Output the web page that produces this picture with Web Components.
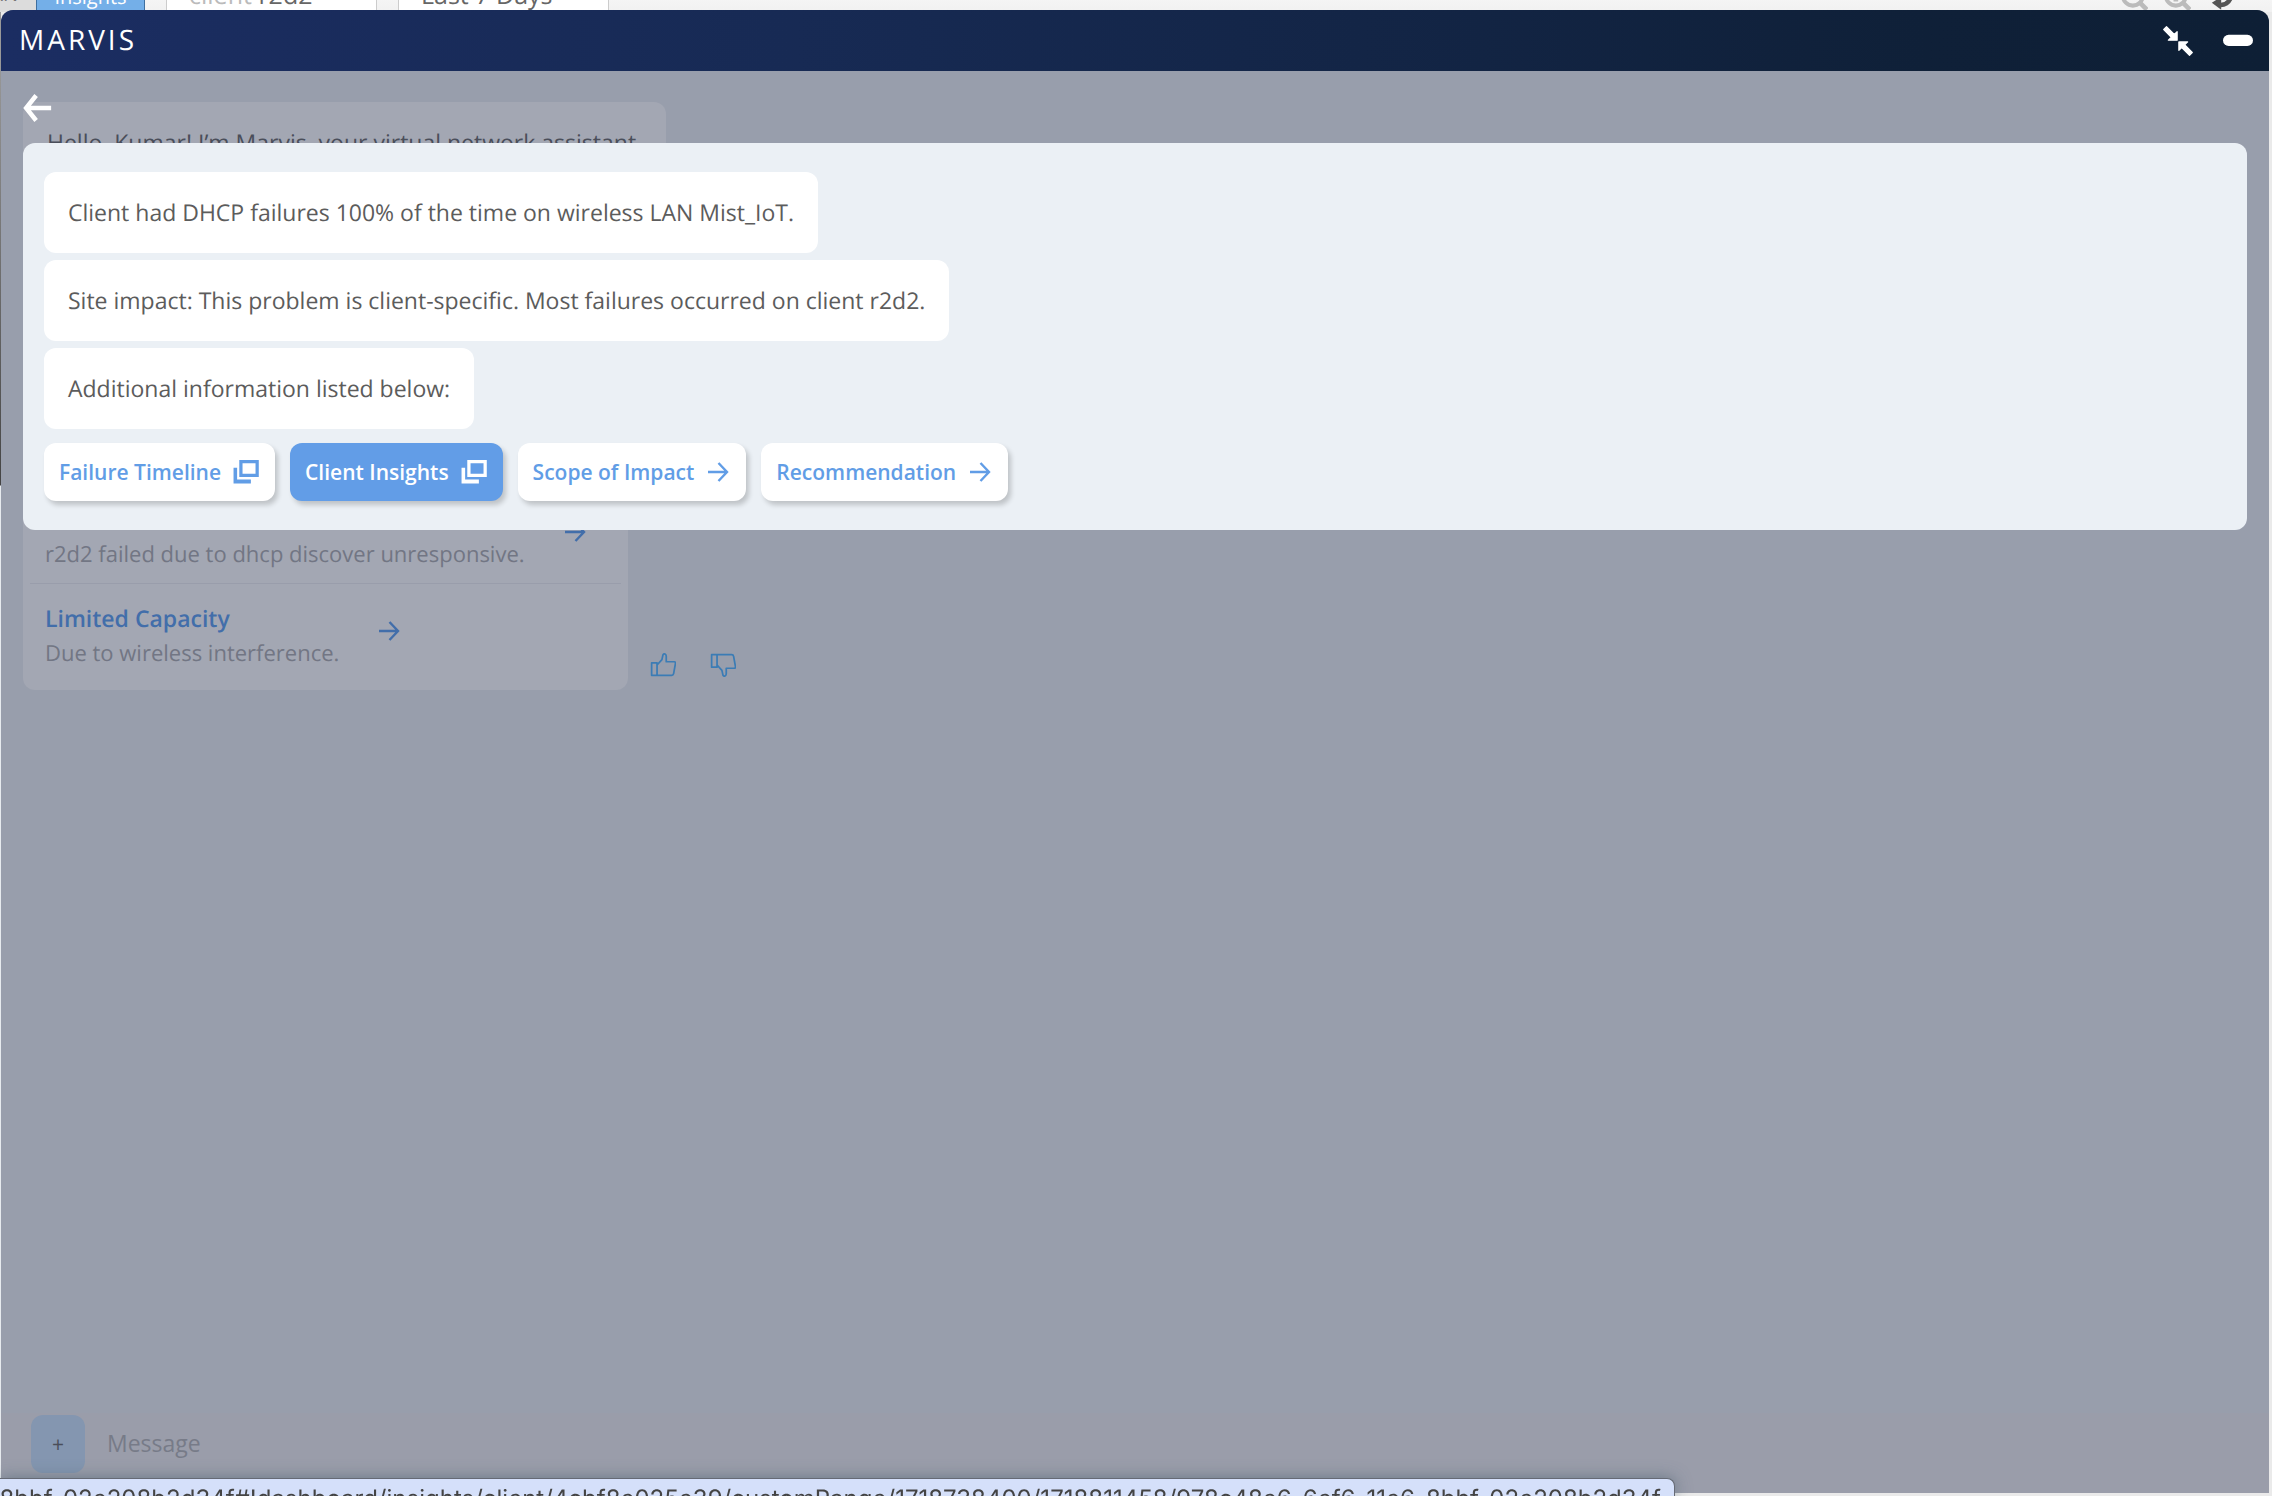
<!DOCTYPE html>
<html lang="en">
<head>
<meta charset="utf-8">
<title>Marvis</title>
<style>
html,body{margin:0;height:100%;overflow:hidden}
body{font-family:"Open Sans","Noto Sans",sans-serif;font-size:23px;line-height:33px;color:#5c5c5c;background:#e9e9e9;text-rendering:geometricPrecision}
</style>
</head>
<body>
<marvis-app></marvis-app>
<script>
const define=(name,css,html)=>customElements.define(name,class extends HTMLElement{
  constructor(){
    super();
    this.attachShadow({mode:'open'}).innerHTML='<style>*{box-sizing:border-box}button,input,select{font:inherit;color:inherit;margin:0;border:0;padding:0;background:none}svg{display:block;flex:none}'+css+'</style>'+(typeof html==='function'?html(this):html);
  }
});

const glyphs={
  arrow:'<path d="M2 12h18M12.500 3l8.500 9-8.500 9" fill="none" stroke="currentColor" stroke-width="2.400"/>',
  windows:'<path d="M7.300 2.500h15v12.500h-15z" fill="none" stroke="currentColor" stroke-width="3"/><path d="M0.500 8v14.500h16v-3.500H3.800V8z" fill="currentColor"/>',
  back:'<path d="M22.500 12H3M10.500 2L2.500 12l8 10" fill="none" stroke="currentColor" stroke-width="3.600"/>',
  compress:'<g fill="currentColor"><path d="M0.600 2.800L2.800.600 9 6.800 11.300 4.600V11.300H4.300L6.700 9z" stroke="currentColor" stroke-linejoin="round"/><path d="M23.400 21.200L21.200 23.400 15 17.200 12.700 19.400V12.700H19.700L17.300 15z" stroke="currentColor" stroke-linejoin="round"/></g>',
  minus:'<rect y="7" width="24" height="9" rx="4.500" fill="currentColor"/>',
  up:'<path d="M1.500 10h5v11.500h-5zM6.500 12l4.500-5 1-4.500c1-1.500 3-.500 3 1.500v5h7.500c.700 0 1 .800 1 1.500l-1.700 9.500c-.200 1-.800 1.500-1.800 1.500H6.500" fill="none" stroke="currentColor" stroke-width="1.600" stroke-linejoin="round"/>',
  zoom:'<circle cx="11" cy="10" r="8.500" fill="none" stroke="currentColor" stroke-width="3.500"/><path d="M17 16l6 6" stroke="currentColor" stroke-width="4"/>',
  zoomin:'<circle cx="11" cy="10" r="8.500" fill="none" stroke="currentColor" stroke-width="3.500"/><path d="M17 16l6 6M11 6v9" stroke="currentColor" stroke-width="4"/>',
  refresh:'<path d="M3 8a9 9 0 0 1 17 0M21 12a9 9 0 0 1-9 6" fill="none" stroke="currentColor" stroke-width="4"/><path d="M13 11v11l-8-6z" fill="currentColor"/>'
};
define('ui-icon',':host{display:block;flex:none;width:24px;height:24px}:host([medium]){width:26px;height:26px}:host([large]){width:30px;height:30px}:host([flip]){transform:scaleY(-1)}svg{width:100%;height:100%}',
  el=>'<svg viewBox="0 0 24 24" aria-hidden="true">'+glyphs[el.getAttribute('name')]+'</svg>');

define('chat-bubble',`:host{display:block;width:fit-content;padding:24px;border-radius:12px;background:#fff;color:#5c5c5c}
:host([dim]){background:#a3a7b3;color:#4a4e5a}`,'<slot></slot>');

define('action-button',`:host{display:block}
button{display:flex;align-items:center;gap:12px;height:58px;padding:0 16px 1px 15px;border-radius:12px;background:#fff;color:#619de6;font-size:21px;line-height:30px;font-weight:600;box-shadow:3px 4px 5px #00000030;white-space:nowrap}
:host([active]) button{background:#629de7;color:#fff}`,
  '<button type="button"><slot></slot><slot name="icon"></slot></button>');

define('result-row',`:host{display:flex;align-items:center;padding:18px 15px 14px;margin:0 7px;border-bottom:1px solid transparent}
:host([divided]){border-color:#999dab}
.copy{display:flex;flex-direction:column;gap:3px}
.title{min-height:33px;font-weight:600;color:#426eaa}
.desc{font-size:22px;line-height:30px;color:#727684}
ui-icon{color:#426eaa;margin:0 0 8px 38px}`,
  '<div class="copy"><div class="title"><slot name="title"></slot></div><div class="desc"><slot></slot></div></div><ui-icon name="arrow"></ui-icon>');

define('page-toolbar',`:host{display:flex;align-items:flex-end;height:48px;margin-top:-36px;background:linear-gradient(#fff,#f1f1f1);color:#666;font-size:25px}
a,.box,.tab{height:48px;line-height:33px;padding-top:15px}
.tab{width:36px;background:#dcdcdc;color:#777;font-size:20px;line-height:30px;overflow:hidden;display:flex;justify-content:flex-end;padding-right:18px}
a{width:109px;padding-top:18px;text-align:center;text-decoration:none;color:#fff;background:#74afe8;border:1px solid #3f6f9f;font-size:20px;line-height:27px}
.box{width:211px;padding-left:22px;background:#fff;border:solid #ccc;border-width:0 1px;margin-left:21px}
.box b{font-weight:400;color:#bbb}
.tools{display:flex;gap:15px;margin-left:auto;padding-right:38px;color:#bbb}
.tools ui-icon{width:28px;height:28px}
.tools .dark{color:#555}`,
  `<span class="tab">WLAN</span><a href="#insights">Insights</a><div class="box"><b>client</b> r2d2</div><div class="box">Last 7 Days</div>
<div class="tools"><ui-icon name="zoom"></ui-icon><ui-icon name="zoomin"></ui-icon><ui-icon class="dark" name="refresh"></ui-icon></div>`);

define('dialog-header',`:host{display:flex;align-items:center;justify-content:space-between;height:61px;padding:0 16px;background:linear-gradient(90deg,#1b2d62,#172a54 35%,#0f2038 85%,#0e1f35);color:#fff}
h1{margin:0;padding:0 2px 2px;font-size:28px;line-height:38px;font-weight:400;letter-spacing:3px}
div{display:flex;gap:30px}button{display:block}`,
  `<h1>MARVIS</h1><div><button aria-label="Shrink"><ui-icon large name="compress"></ui-icon></button><button aria-label="Minimize"><ui-icon large name="minus"></ui-icon></button></div>`);

define('chat-history',`:host{display:flex;flex-direction:column;gap:10px;padding:31px 22px}
.row{display:flex;align-items:flex-end;gap:22px}
.card{display:flex;flex-direction:column;justify-content:flex-end;min-height:497px;padding-bottom:7px;border-radius:12px;background:#a3a7b3}
.vote{display:flex;gap:34px;color:#3b7cb5;padding-bottom:12px}
.card result-row:first-child{padding-right:34px}`,
  `<chat-bubble dim>Hello, Kumar! I’m Marvis, your virtual network assistant.</chat-bubble>
<div class="row"><div class="card"><result-row divided>r2d2 failed due to dhcp discover unresponsive.</result-row>
<result-row><span slot="title">Limited Capacity</span>Due to wireless interference.</result-row></div>
<div class="vote"><button aria-label="Helpful"><ui-icon medium name="up"></ui-icon></button><button aria-label="Not helpful"><ui-icon medium flip name="up"></ui-icon></button></div></div>`);

define('detail-panel',`:host{display:flex;flex-direction:column;gap:7px;padding:29px 21px;border-radius:12px;background:#ebf0f5}
nav{display:flex;gap:15px;margin-top:7px}`,
  `<chat-bubble>Client had DHCP failures 100% of the time on wireless LAN Mist_IoT.</chat-bubble>
<chat-bubble>Site impact: This problem is client-specific. Most failures occurred on client r2d2.</chat-bubble>
<chat-bubble>Additional information listed below:</chat-bubble>
<nav><action-button>Failure Timeline<ui-icon medium slot="icon" name="windows"></ui-icon></action-button>
<action-button active>Client Insights<ui-icon medium slot="icon" name="windows"></ui-icon></action-button>
<action-button>Scope of Impact<ui-icon slot="icon" name="arrow"></ui-icon></action-button>
<action-button>Recommendation<ui-icon slot="icon" name="arrow"></ui-icon></action-button></nav>`);

define('message-bar',`:host{display:flex;align-items:center;gap:22px;padding:2px 30px 20px;background:#9a9daa}
button{width:54px;height:58px;border-radius:12px;background:#8496b0;color:#4a4e5a;font-size:21px}
input{flex:1;min-width:0;height:58px;padding-bottom:2px;outline:0}
input::placeholder{color:#777b88;opacity:1}`,
  '<button aria-label="Add">+</button><input type="text" aria-label="Message" placeholder="Message">');

define('marvis-dialog',`:host{position:fixed;inset:10px 3px 3px 1px;display:flex;flex-direction:column;border-radius:12px 12px 0 0;overflow:hidden;background:#989eac}
main{position:relative;flex:1}
.overlay{position:absolute;inset:0;padding:22px;display:flex;flex-direction:column;gap:20px}
.overlay button{width:30px;height:30px;color:#fff}`,
  `<dialog-header></dialog-header><main><chat-history></chat-history>
<div class="overlay"><button aria-label="Back"><ui-icon large name="back"></ui-icon></button><detail-panel></detail-panel></div></main><message-bar></message-bar>`);

define('link-status',`:host{position:fixed;left:0;bottom:0;display:flex;justify-content:flex-end;width:1675px;max-width:100%;height:18px;padding:5px 13px 0 0;overflow:hidden;box-sizing:border-box;border-top:1px solid #666a75;border-right:1px solid #666a75;border-top-right-radius:8px;background:#d5e0fa;color:#444;font:24px/30px Inter,sans-serif;white-space:nowrap;box-shadow:0 0 16px #4a6070a0}`,
  '<span>8bbf-02e208b2d34f#!dashboard/insights/client/4cbf8e025e39/customRange/1718738400/1718811458/978c48e6-6ef6-11e6-8bbf-02e208b2d34f</span>');

define('marvis-app',`:host{display:flow-root;height:100vh;background:linear-gradient(#999 60px,#444 485px,#e6eaee 486px,#e6eaee) 0 0/1px 100% no-repeat,#eaeaea}`,
  '<page-toolbar></page-toolbar><marvis-dialog></marvis-dialog><link-status></link-status>');
</script>
</body>
</html>
